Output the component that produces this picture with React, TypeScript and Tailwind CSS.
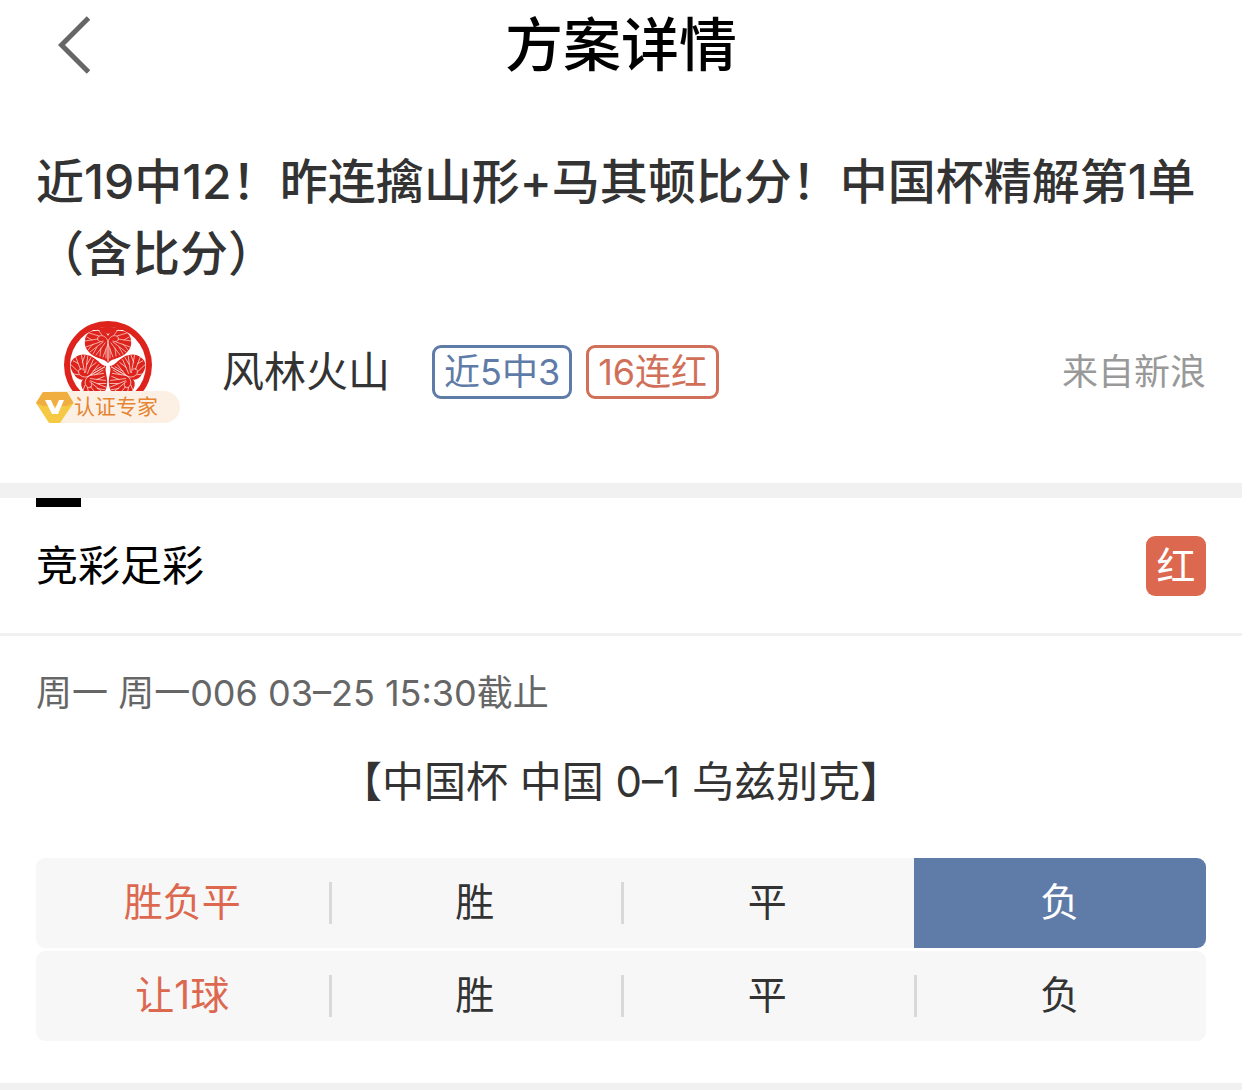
import { useState } from 'react'

const rows = [
  { id: 'spf', label: '胜负平', options: ['胜', '平', '负'], picked: 2 },
  { id: 'rq', label: '让1球', options: ['胜', '平', '负'], picked: -1 },
]

// one half of the leaf, mirrored for the other side
const leafVeins = [
  'M44 21C43 15 37 13 34 16C32 19 36 22 39 20',
  'M44 21V40',
  'M44 23L39 36M42 28L42 37',
  'M41 22L32 34M37 27L36 35',
  'M39 21L26 31M33 26L29 33',
  'M36 21L22 26M29 23L24 29',
  'M34 18L21 20M28 19L23 16',
  'M35 15L25 12M38 14L34 9',
]

function Leaf({ angle }: { angle: number }) {
  return (
    <g transform={`rotate(${angle} 44 44)`}>
      <path
        d="M44 42C41 38 35 38 30 35C23 31 20 25 21 20C21 12 28 9 35 10C40 10 43 12 44 15C45 12 48 10 53 10C60 9 67 12 67 20C68 25 65 31 58 35C53 38 47 38 44 42Z"
        fill="#de231c"
      />
      {leafVeins.map((d) => (
        <g key={d} stroke="#fbdcd7" strokeWidth="0.700" fill="none" strokeLinecap="round">
          <path d={d} />
          <path d={d} transform="translate(88 0) scale(-1 1)" />
        </g>
      ))}
    </g>
  )
}

function Avatar() {
  return (
    <div className="relative h-[102px] w-36 shrink-0">
      <svg className="mx-auto h-[88px] w-[88px]" viewBox="0 0 88 88" aria-hidden="true">
        <circle cx="44" cy="44" r="44" fill="#de231c" />
        <circle cx="44" cy="44" r="38" fill="#fff" />
        <path d="M26 9C34 5 54 5 62 9L54 9L44 13L34 9Z" fill="#de231c" />
        <Leaf angle={0} />
        <Leaf angle={120} />
        <Leaf angle={240} />
      </svg>
      {/* Verified badge */}
      <div className="absolute bottom-0 left-0 flex h-8 w-36 items-center overflow-hidden">
        <div className="absolute inset-y-0 left-4 right-0 rounded-r-full bg-[#fcf0e4]" />
        <svg className="relative h-8 w-[38px]" viewBox="0 0 38 32" aria-hidden="true">
          <path d="M7 1H31L37.500 12L24 32H13L0 12Z" fill="#f6c944" />
          <path d="M7 1H31L37.500 12L31 15H7L0 12Z" fill="#f0ad40" />
          <path d="M9 9H15L19 18L23 9H28L22 23H16Z" fill="#fff" />
        </svg>
        <span className="relative text-[21px] leading-8 text-[#e58432]">认证专家</span>
      </div>
    </div>
  )
}

export default function App() {
  const [picks, setPicks] = useState(rows.map((row) => row.picked))

  const pick = (rowIndex: number, optionIndex: number) => {
    setPicks(picks.map((p, i) => (i === rowIndex ? optionIndex : p)))
  }

  return (
    <div className="min-h-screen bg-[#f1f1f1] font-['Inter','Noto_Sans_CJK_SC',sans-serif] text-[#333]">
      <main className="bg-white pb-[42px]">
        {/* Header */}
        <header className="grid h-[90px] grid-cols-[1fr_auto_1fr] items-center px-9">
          <button type="button" aria-label="返回" className="w-fit pl-[22px]">
            <svg className="h-[60px] w-8" viewBox="0 0 32 60" fill="none" aria-hidden="true">
              <path d="M30.500 3L3.500 30L30.500 57" stroke="#666" strokeWidth="5" />
            </svg>
          </button>
          <h1 className="text-[58px] font-medium leading-none text-black">方案详情</h1>
        </header>

        {/* Article title and author */}
        <section className="px-9 pt-14">
          <h2 className="text-5xl font-medium leading-[72px]">
            近19中12！昨连擒山形+马其顿比分！中国杯精解第1单（含比分）
          </h2>
          <div className="flex items-center pb-[60px] pt-[31px]">
            <Avatar />
            <span className="ml-[42px] text-[42px] leading-[54px]">风林火山</span>
            <div className="ml-[42px] flex gap-3.5 text-4xl leading-[48px]">
              <span className="rounded-[9px] border-3 border-[#5f7ba8] px-[9px] text-[#5f7ba8]">近5中3</span>
              <span className="rounded-[9px] border-3 border-[#d07058] px-[9px] text-[#d07058]">16连红</span>
            </div>
            <span className="ml-auto text-4xl leading-[54px] text-[#999]">来自新浪</span>
          </div>
        </section>

        <div className="h-[15px] bg-[#f1f1f1]" />

        {/* Lottery type */}
        <section className="border-b-3 border-[#f1f1f1] px-9">
          <div className="h-[9px] w-[45px] bg-black" />
          <div className="flex items-center justify-between pb-[37px] pt-[29px]">
            <h3 className="text-[42px] leading-[60px] text-black">竞彩足彩</h3>
            <span className="h-[60px] w-[60px] rounded-[9px] bg-[#dd6850] text-center text-[39px] leading-[60px] text-white">
              红
            </span>
          </div>
        </section>

        {/* Match and picks */}
        <section className="px-9 pt-[30px]">
          <p className="text-4xl leading-[54px] text-[#666]">周一 周一006 03–25 15:30截止</p>
          <p className="pt-[30px] text-center text-[42px] leading-[63px]">【中国杯 中国 0–1 乌兹别克】</p>
          <div className="flex flex-col gap-[3px] pt-[45px] text-[39px] leading-[88px]">
            {rows.map((row, r) => (
              <div key={row.id} className="grid h-[90px] grid-cols-4 overflow-hidden rounded-[9px] bg-[#f7f7f7]">
                <span className="text-center text-[#dd6850]">{row.label}</span>
                {row.options.map((option, i) => {
                  const active = picks[r] === i
                  return (
                    <button
                      key={option}
                      type="button"
                      aria-pressed={active}
                      onClick={() => pick(r, i)}
                      className={`flex items-center ${active ? 'bg-[#5f7ba8] text-white' : ''}`}
                    >
                      <span className={`-mr-[3px] h-[42px] w-[3px] ${active ? '' : 'bg-[#d9d9d9]'}`} />
                      <span className="h-full flex-1 text-center">{option}</span>
                    </button>
                  )
                })}
              </div>
            ))}
          </div>
        </section>
      </main>
    </div>
  )
}
